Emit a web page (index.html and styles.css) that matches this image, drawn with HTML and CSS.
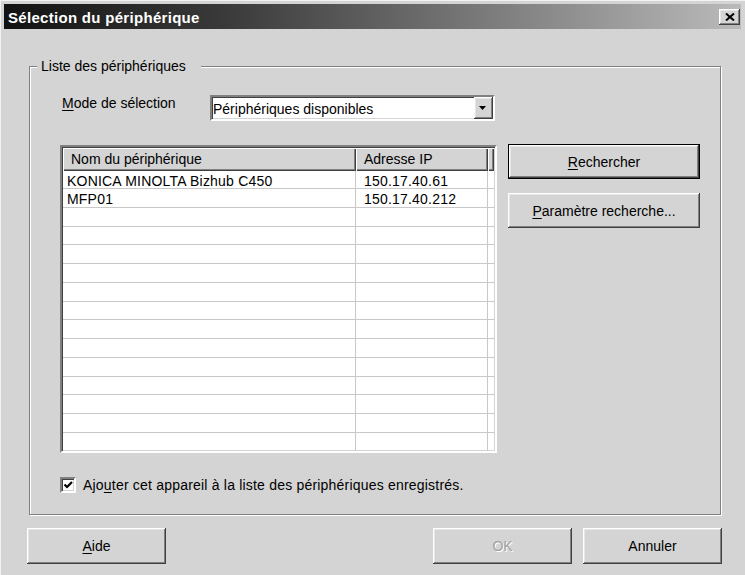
FILE: index.html
```html
<!DOCTYPE html>
<html lang="fr">
<head>
<meta charset="utf-8">
<title>Sélection du périphérique</title>
<link rel="stylesheet" href="styles.css">
</head>
<body>
<div class="window">
  <div class="titlebar">
    <span class="title">Sélection du périphérique</span>
    <button class="close" aria-label="Fermer">
      <svg width="10" height="8" viewBox="0 0 10 8"><path d="M1 0.5 L9 7.5 M9 0.5 L1 7.5" stroke="#000" stroke-width="2" fill="none"/></svg>
    </button>
  </div>

  <div class="group">
    <div class="group-label">Liste des périphériques</div>

    <div class="mode-row">
      <span class="mode-label"><u>M</u>ode de sélection</span>
      <div class="combo">
        <span class="combo-text">Périphériques disponibles</span>
        <span class="combo-btn">
          <svg width="7" height="4" viewBox="0 0 7 4"><polygon points="0,0 7,0 3.5,4" fill="#000"/></svg>
        </span>
      </div>
    </div>

    <div class="list-row">
      <div class="listview">
        <div class="lv-header">
          <div class="lv-h first">Nom du périphérique</div>
          <div class="lv-h">Adresse IP</div>
          <div class="lv-h filler"></div>
        </div>
        <div class="lv-row"><div class="lv-c first">KONICA MINOLTA Bizhub C450</div><div class="lv-c ip">150.17.40.61</div><div class="lv-c filler"></div></div>
        <div class="lv-row"><div class="lv-c first">MFP01</div><div class="lv-c ip">150.17.40.212</div><div class="lv-c filler"></div></div>
        <div class="lv-row"><div class="lv-c first"></div><div class="lv-c ip"></div><div class="lv-c filler"></div></div>
        <div class="lv-row"><div class="lv-c first"></div><div class="lv-c ip"></div><div class="lv-c filler"></div></div>
        <div class="lv-row"><div class="lv-c first"></div><div class="lv-c ip"></div><div class="lv-c filler"></div></div>
        <div class="lv-row"><div class="lv-c first"></div><div class="lv-c ip"></div><div class="lv-c filler"></div></div>
        <div class="lv-row"><div class="lv-c first"></div><div class="lv-c ip"></div><div class="lv-c filler"></div></div>
        <div class="lv-row"><div class="lv-c first"></div><div class="lv-c ip"></div><div class="lv-c filler"></div></div>
        <div class="lv-row"><div class="lv-c first"></div><div class="lv-c ip"></div><div class="lv-c filler"></div></div>
        <div class="lv-row"><div class="lv-c first"></div><div class="lv-c ip"></div><div class="lv-c filler"></div></div>
        <div class="lv-row"><div class="lv-c first"></div><div class="lv-c ip"></div><div class="lv-c filler"></div></div>
        <div class="lv-row"><div class="lv-c first"></div><div class="lv-c ip"></div><div class="lv-c filler"></div></div>
        <div class="lv-row"><div class="lv-c first"></div><div class="lv-c ip"></div><div class="lv-c filler"></div></div>
        <div class="lv-row"><div class="lv-c first"></div><div class="lv-c ip"></div><div class="lv-c filler"></div></div>
        <div class="lv-row"><div class="lv-c first"></div><div class="lv-c ip"></div><div class="lv-c filler"></div></div>
      </div>
      <div class="side-buttons">
        <button class="btn default"><u>R</u>echercher</button>
        <button class="btn"><u>P</u>aramètre recherche...</button>
      </div>
    </div>

    <label class="check-row">
      <span class="checkbox">
        <svg width="12" height="12" viewBox="0 0 12 12"><path d="M2.5 5.5 L5 8 L10 3" stroke="#000" stroke-width="2.2" fill="none"/></svg>
      </span>
      <span class="check-text">Ajo<u>u</u>ter cet appareil à la liste des périphériques enregistrés.</span>
    </label>
  </div>

  <div class="bottom-row">
    <button class="btn wide"><u>A</u>ide</button>
    <span class="spacer"></span>
    <button class="btn wide disabled">OK</button>
    <button class="btn wide cancel">Annuler</button>
  </div>
</div>
</body>
</html>
```
FILE: styles.css
```css
* { box-sizing: border-box; }

body {
  margin: 0;
  background: #d4d4d4;
  font-family: "Liberation Sans", Arial, sans-serif;
  font-size: 14px;
  color: #000;
}

.window {
  width: 745px;
  height: 575px;
  background: #d4d4d4;
  padding: 4px 4px 0;
  box-shadow: inset 1px 1px 0 #f2f2f2;
  overflow: hidden;
}

.titlebar {
  height: 25px;
  display: flex;
  justify-content: space-between;
  align-items: flex-start;
  padding: 0 1px 0 4px;
  background: linear-gradient(to right, #121212 0%, #3a3a3a 30%, #bababa 100%);
}

.title {
  color: #fff;
  font-weight: bold;
  font-size: 15px;
  letter-spacing: 0.3px;
  line-height: 17px;
  margin-top: 5px;
}

.close {
  width: 21px;
  height: 16px;
  margin-top: 5px;
  padding: 0;
  border: 0;
  background: #d4d4d4;
  display: flex;
  align-items: center;
  justify-content: center;
  box-shadow: inset -1px -1px 0 #404040, inset 1px 1px 0 #fff, inset -2px -2px 0 #808080, inset 2px 2px 0 #e6e6e6;
}

.group {
  margin: 37px 0 0 25px;
  width: 692px;
  height: 449px;
  border: 1px solid #808080;
  box-shadow: inset 1px 1px 0 #fff, 1px 1px 0 #fff;
}

.group-label {
  width: fit-content;
  margin: -9px 0 0 7px;
  padding: 0 15px 0 4px;
  background: #d4d4d4;
  line-height: 16px;
}

.mode-row {
  display: flex;
  align-items: flex-start;
  height: 26px;
  margin: 21px 0 0 32px;
}

.mode-label {
  width: 148px;
  line-height: 16px;
}

.combo {
  width: 285px;
  height: 26px;
  display: flex;
  background: #fff;
  border: 2px solid;
  border-color: #808080 #fff #fff #808080;
  box-shadow: inset 1px 1px 0 #404040, inset -1px -1px 0 #d4d4d4;
}

.combo-text {
  flex: 1;
  line-height: 22px;
  padding: 1px 0 0 1px;
}

.combo-btn {
  width: 19px;
  height: 22px;
  background: #d4d4d4;
  display: flex;
  align-items: center;
  justify-content: center;
  padding-right: 2px;
  box-shadow: inset -1px -1px 0 #404040, inset 1px 1px 0 #fff, inset -2px -2px 0 #808080, inset 2px 2px 0 #e6e6e6;
}

.list-row {
  display: flex;
  align-items: flex-start;
  margin: 24px 0 0 30px;
}

.listview {
  width: 437px;
  height: 308px;
  background: #fff;
  border: 2px solid;
  border-color: #808080 #fff #fff #808080;
  box-shadow: inset 1px 1px 0 #404040, inset -1px -1px 0 #d4d4d4;
  padding: 1px 1px 0 1px;
  overflow: hidden;
}

.lv-header,
.lv-row {
  display: grid;
  grid-template-columns: 293px 132px 1fr;
}

.lv-header {
  height: 22.6px;
}

.lv-h {
  background: #d4d4d4;
  line-height: 16px;
  padding: 3px 0 0 8px;
  white-space: nowrap;
  box-shadow: inset 1px 1px 0 #fff, inset -1px -1px 0 #404040, inset -2px -2px 0 #808080;
}

.lv-h.first { padding-left: 8px; }
.lv-h.filler { padding: 0; }

.lv-row {
  height: 18.72px;
  border-bottom: 1px solid #c8c8c8;
}

.lv-row:last-child { border-bottom: 0; }

.lv-c {
  line-height: 16px;
  padding-top: 2px;
  white-space: nowrap;
  letter-spacing: 0.2px;
}

.lv-c.first {
  padding-left: 4px;
  border-right: 1px solid #c8c8c8;
}

.lv-c.ip {
  padding-left: 8px;
  border-right: 1px solid #c8c8c8;
}

.side-buttons {
  display: flex;
  flex-direction: column;
  gap: 14px;
  margin: -1px 0 0 11px;
}

.btn {
  font: inherit;
  color: #000;
  width: 192px;
  height: 35px;
  padding: 0;
  border: 0;
  background: #d4d4d4;
  text-align: center;
  box-shadow: inset -1px -1px 0 #404040, inset 1px 1px 0 #fff, inset -2px -2px 0 #808080, inset 2px 2px 0 #e6e6e6;
}

.btn.default {
  border: 1px solid #000;
}

.btn u,
.mode-label u,
.check-text u {
  text-underline-offset: 2px;
}

.check-row {
  display: flex;
  align-items: center;
  margin: 24px 0 0 30px;
  height: 16px;
}

.checkbox {
  width: 16px;
  height: 16px;
  background: #fff;
  border: 2px solid;
  border-color: #808080 #fff #fff #808080;
  box-shadow: inset 1px 1px 0 #404040, inset -1px -1px 0 #d4d4d4;
  display: flex;
  align-items: center;
  justify-content: center;
  margin-right: 7px;
}

.check-text {
  line-height: 16px;
  letter-spacing: 0.2px;
}

.bottom-row {
  display: flex;
  margin-top: 13px;
  padding: 0 19px 0 23px;
}

.spacer { flex: 1; }

.btn.wide {
  width: 139px;
  height: 36px;
}

.btn.disabled {
  color: #a0a0a0;
  text-shadow: 1px 1px 0 #fff;
}

.btn.cancel {
  margin-left: 11px;
}
```
